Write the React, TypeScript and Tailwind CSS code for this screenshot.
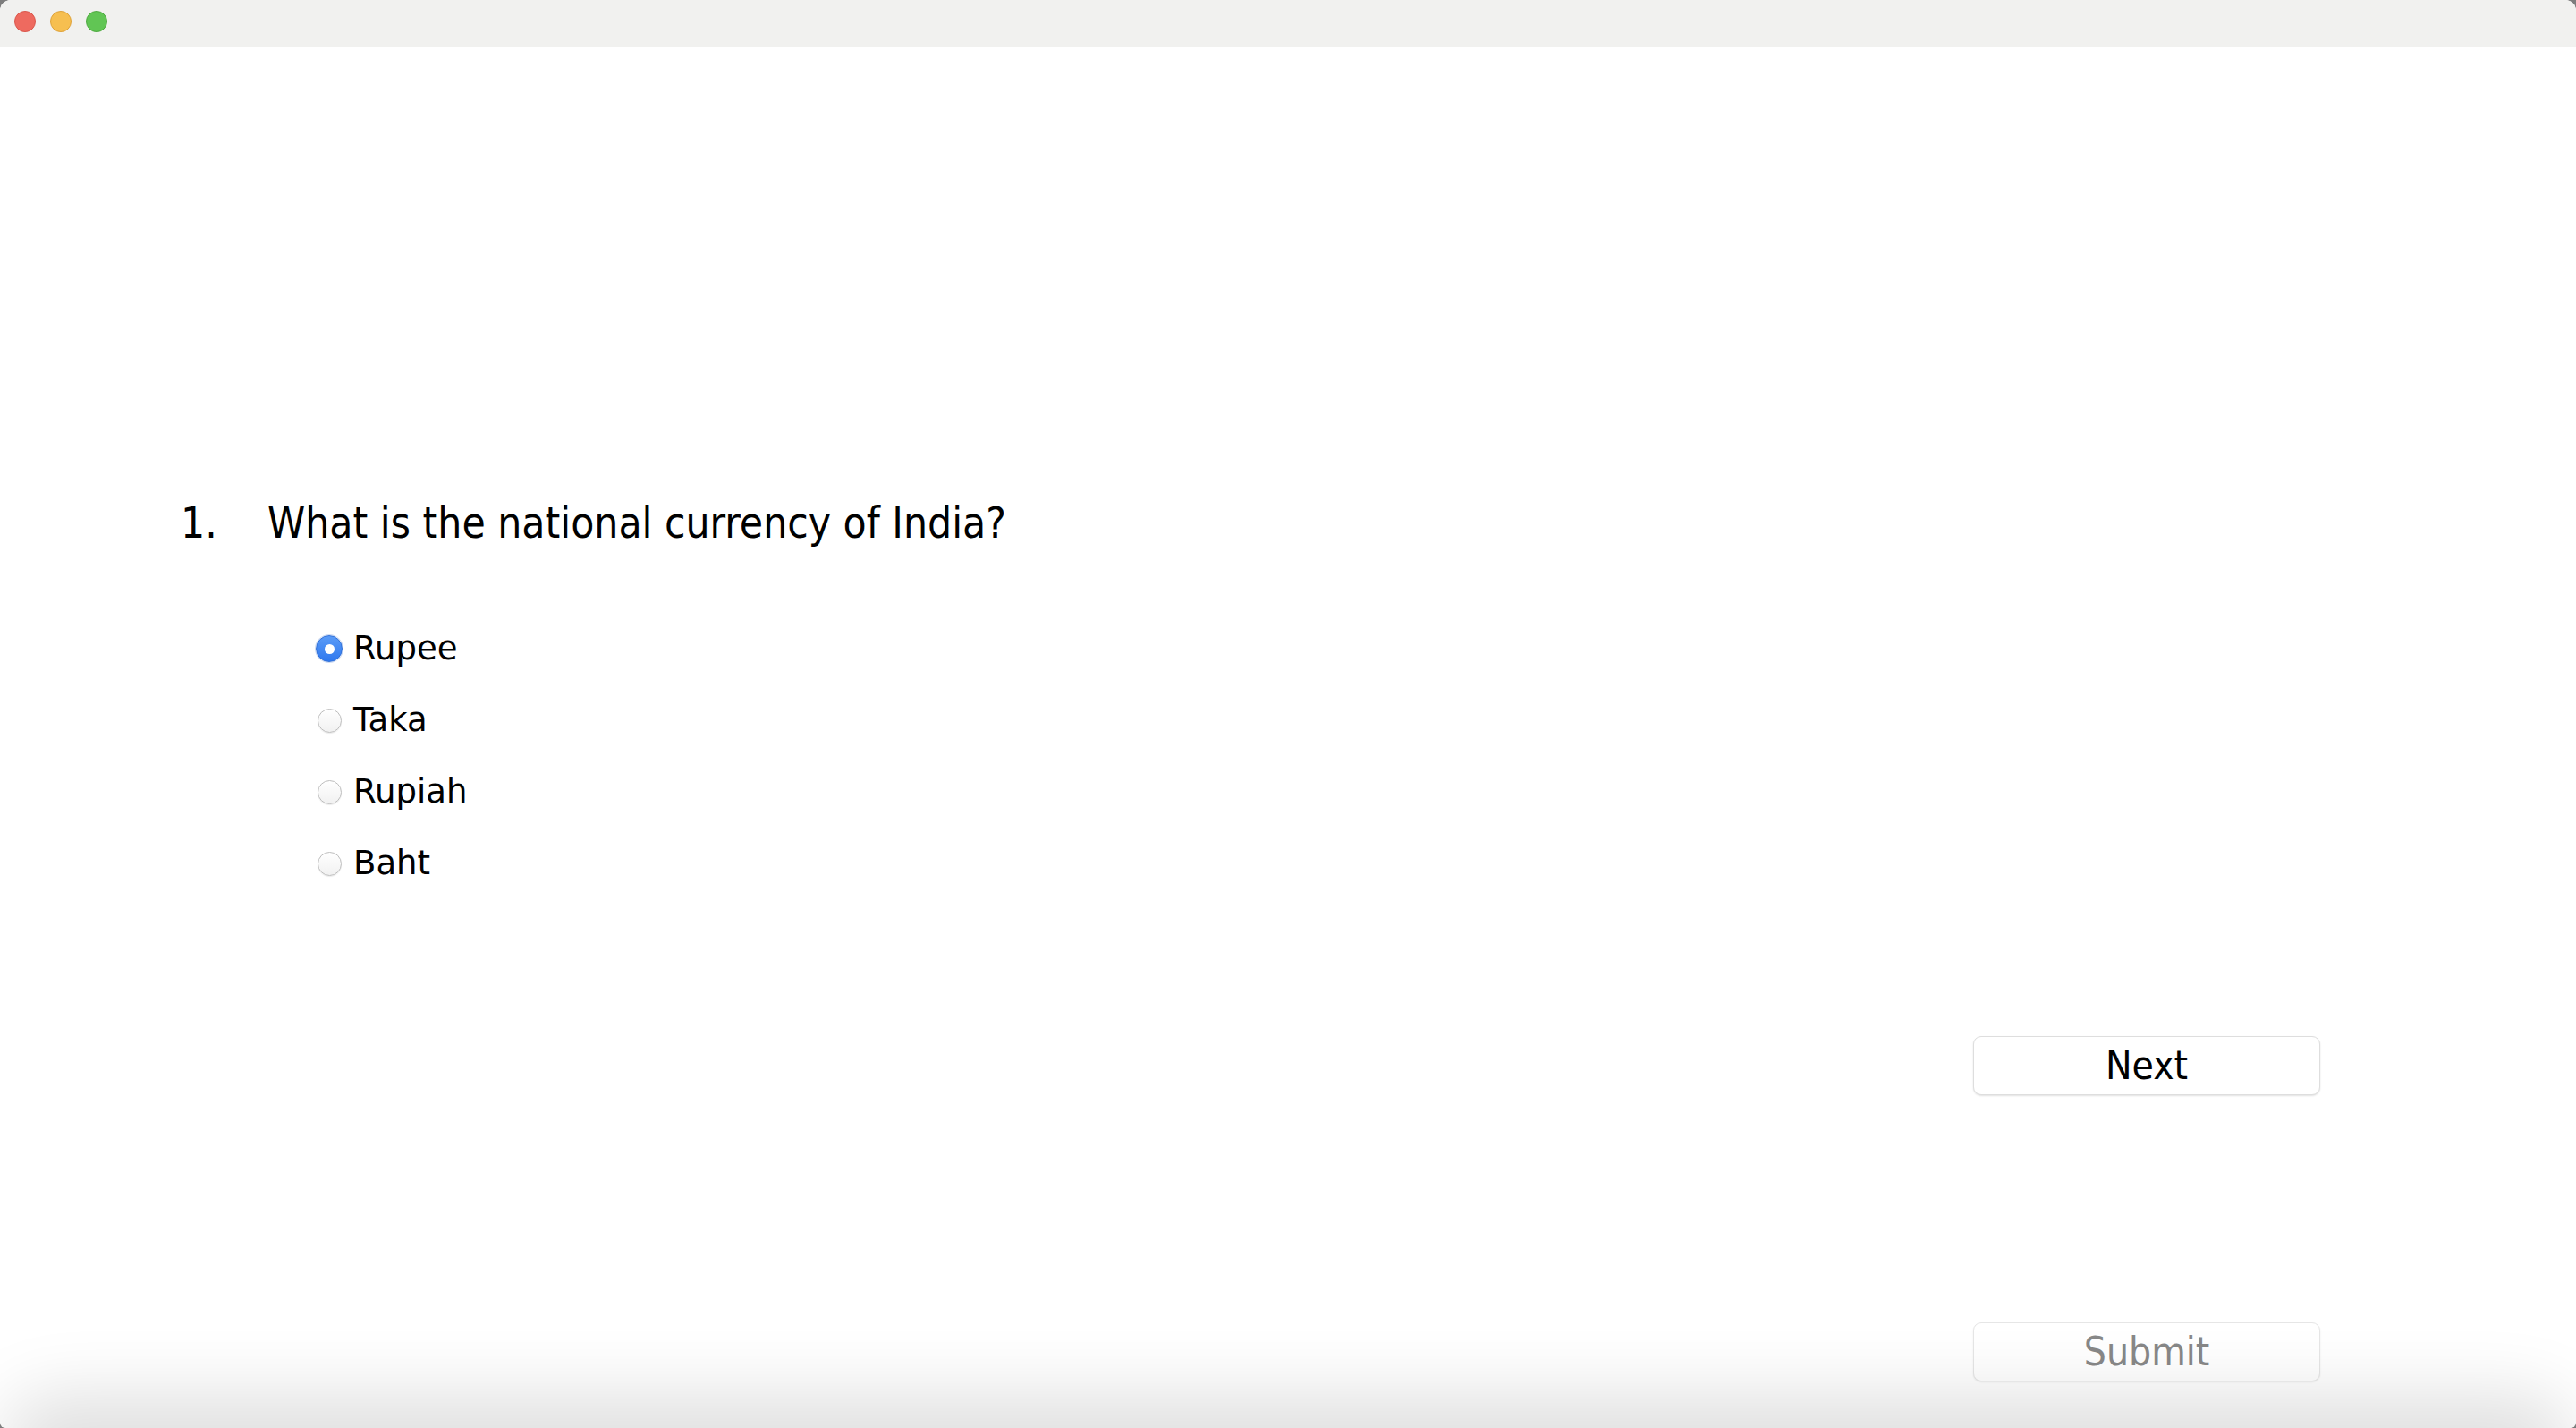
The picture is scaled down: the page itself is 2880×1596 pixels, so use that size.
import React from "react";

const options = ["Rupee", "Taka", "Rupiah", "Baht"];

function Radio({ checked }: { checked: boolean }) {
  if (checked) {
    return (
      <span className="flex h-[30px] w-[30px] items-center justify-center rounded-full border border-[#2f6fd8] bg-gradient-to-b from-[#5a9bf7] to-[#2f78ee] shadow-[0_0_0_1px_rgba(60,110,200,0.25)]">
        <span className="h-[11px] w-[11px] rounded-full bg-white" />
      </span>
    );
  }
  return (
    <span className="flex h-[30px] w-[30px] items-center justify-center">
      <span className="h-[27px] w-[27px] rounded-full border border-[#bdbdbd] bg-gradient-to-b from-white to-[#f1f1f1] shadow-[0_1px_1px_rgba(0,0,0,0.08)]" />
    </span>
  );
}

export default function App() {
  const selected = 0;
  return (
    <div className="relative h-[1596px] w-[2880px] overflow-hidden bg-[#7d7d7d]">
      <div className="relative flex h-full flex-col overflow-hidden rounded-t-[12px] rounded-b-[6px] bg-white">
        {/* title bar */}
        <div className="flex h-[53px] shrink-0 items-center gap-[16px] border-b border-[#d7d7d5] bg-[#f1f1ef] pl-[16px] pb-[4px]">
          <span className="h-[24px] w-[24px] rounded-full border border-[#d9574c] bg-[#ee6a5f]" />
          <span className="h-[24px] w-[24px] rounded-full border border-[#dea23a] bg-[#f6bf50]" />
          <span className="h-[24px] w-[24px] rounded-full border border-[#4ea93f] bg-[#61c554]" />
        </div>

        {/* question */}
        <div className="flex flex-1 flex-col pt-[502px]">
          <div className="flex h-[60px] items-center pl-[202px] font-['DejaVu_Sans',sans-serif] text-[47.5px] font-stretch-condensed text-black">
            <span className="w-[97px]">1.</span>
            <span>What is the national currency of India?</span>
          </div>

          <div className="mt-[70px] flex flex-col pl-[353px]">
            {options.map((o, i) => (
              <label key={o} className="flex h-[80px] items-center gap-[12px]">
                <Radio checked={i === selected} />
                <span className="font-['DejaVu_Sans',sans-serif] text-[37px] text-black">{o}</span>
              </label>
            ))}
          </div>

          <div className="mt-[153px] flex flex-col items-end pr-[286px]">
            <button className="flex h-[66px] w-[388px] items-center justify-center rounded-[9px] border border-[#dedede] bg-white font-['DejaVu_Sans',sans-serif] text-[44px] font-stretch-condensed text-black shadow-[0_1px_2px_rgba(0,0,0,0.12)]">
              Next
            </button>
            <button className="mt-[254px] flex h-[66px] w-[388px] items-center justify-center rounded-[9px] border border-[#e6e6e6] bg-white font-['DejaVu_Sans',sans-serif] text-[44px] font-stretch-condensed text-[#888888] shadow-[0_1px_2px_rgba(0,0,0,0.08)]">
              Submit
            </button>
          </div>
        </div>

        {/* shadow of the window below */}
        <div className="pointer-events-none absolute left-[40px] right-[40px] top-full h-[40px] rounded-full shadow-[0_0_80px_36px_rgba(0,0,0,0.13)]" />
      </div>
    </div>
  );
}
